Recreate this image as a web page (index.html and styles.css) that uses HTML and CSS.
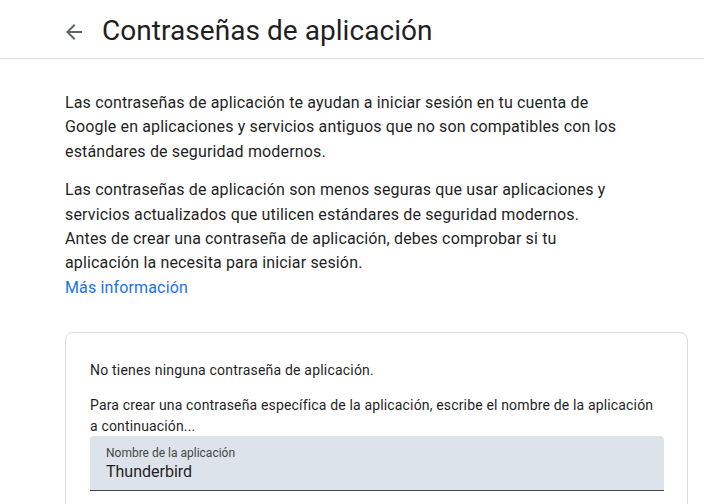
FILE: index.html
```html
<!DOCTYPE html>
<html lang="es">
<head>
<meta charset="utf-8">
<link rel="stylesheet" href="styles.css">
</head>
<body>
<header class="topbar">
  <svg class="back" width="24" height="24" viewBox="0 0 24 24"><path d="M20 11H7.83l5.59-5.59L12 4l-8 8 8 8 1.41-1.41L7.83 13H20v-2z" fill="#5f6368"/></svg>
  <h1 class="title">Contraseñas de aplicación</h1>
</header>
<main class="content">
  <p class="para">Las contraseñas de aplicación te ayudan a iniciar sesión en tu cuenta de Google en aplicaciones y servicios antiguos que no son compatibles con los estándares de seguridad modernos.</p>
  <p class="para">Las contraseñas de aplicación son menos seguras que usar aplicaciones y servicios actualizados que utilicen estándares de seguridad modernos. Antes de crear una contraseña de aplicación, debes comprobar si tu aplicación la necesita para iniciar sesión.<br><a class="link" href="#">Más información</a></p>
  <section class="card">
    <p class="card-text first">No tienes ninguna contraseña de aplicación.</p>
    <p class="card-text second">Para crear una contraseña específica de la aplicación, escribe el nombre de la aplicación a continuación...</p>
    <div class="field">
      <span class="field-label">Nombre de la aplicación</span>
      <span class="field-value">Thunderbird</span>
    </div>
  </section>
</main>
</body>
</html>
```
FILE: styles.css
```css
html, body {
  margin: 0;
  padding: 0;
  background: #fff;
  font-family: Roboto, "Liberation Sans", sans-serif;
  color: #1f1f1f;
  overflow: hidden;
}
.topbar {
  display: flex;
  align-items: center;
  height: 59px;
  border-bottom: 1px solid #dadce0;
  padding-left: 62px;
  padding-top: 4px;
  box-sizing: border-box;
}
.back {
  flex: none;
  margin-right: 16px;
  margin-top: 1px;
}
.title {
  margin: 0;
  font-weight: 400;
  font-size: 28px;
  line-height: 36px;
  letter-spacing: 0.05px;
  color: #1f1f1f;
}
.content {
  padding: 32px 16px 0 65px;
}
.para {
  margin: 0 0 14px 0;
  width: 552px;
  font-size: 16px;
  line-height: 24.4px;
  letter-spacing: 0.15px;
  color: #1f1f1f;
}
.link {
  color: #1a73e8;
  text-decoration: none;
}
.card {
  margin-top: 32px;
  width: 623px;
  box-sizing: border-box;
  border: 1px solid #dadce0;
  border-radius: 8px;
  padding: 27px 24px 24px 24px;
}
.card-text {
  margin: 0 0 14px 0;
  font-size: 14px;
  line-height: 21px;
  color: #1f1f1f;
}
.card-text.first {
  letter-spacing: 0.2px;
}
.card-text.second {
  margin-bottom: 0;
  letter-spacing: 0.16px;
}
.field {
  display: flex;
  flex-direction: column;
  background: #dde3ea;
  border-radius: 4px 4px 0 0;
  border-bottom: 1px solid #444746;
  padding: 9px 16px 7px 16px;
  margin-top: -1px;
  width: 574px;
  box-sizing: border-box;
}
.field-label {
  font-size: 12px;
  line-height: 16px;
  color: #444746;
}
.field-value {
  font-size: 16px;
  line-height: 22px;
  color: #1f1f1f;
}
```
